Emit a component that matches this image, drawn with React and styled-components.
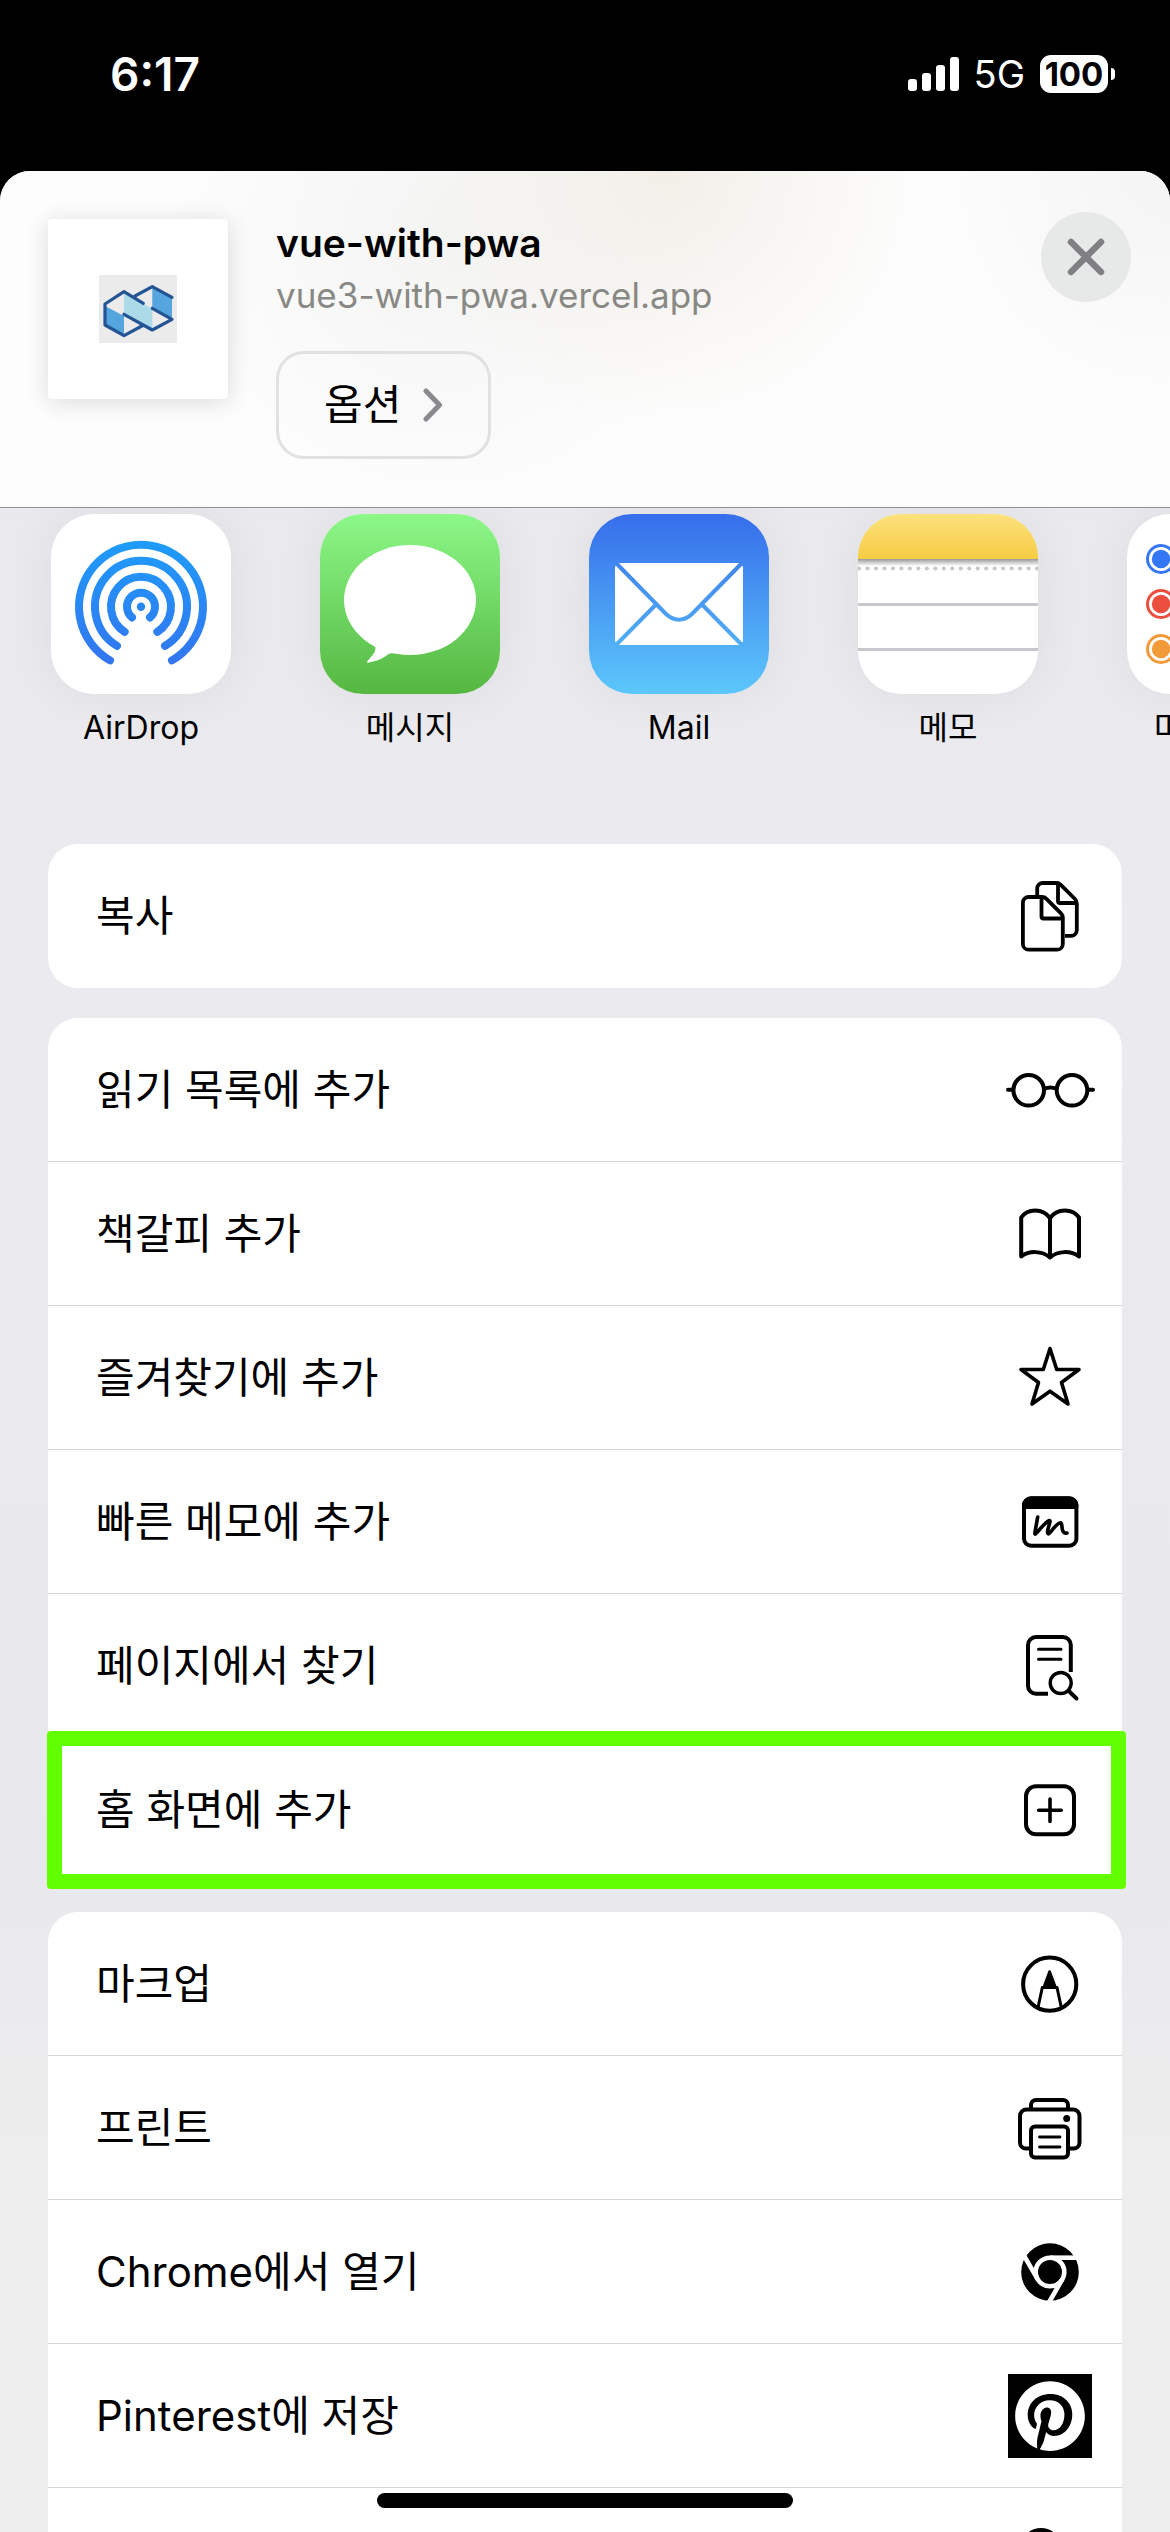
import React from "react";
import styled, { createGlobalStyle } from "styled-components";
import { FaPinterest } from "react-icons/fa";

const GlobalStyle = createGlobalStyle`
  *, *::before, *::after { box-sizing: border-box; }
  html { background: #000; }
  body {
    margin: 0;
    font-family: Inter, "Noto Sans CJK KR", sans-serif;
    color: #000;
  }
  button { font: inherit; color: inherit; cursor: pointer; }
`;

const Screen = styled.div`
  position: relative;
  display: flex;
  flex-direction: column;
  height: 100vh;
  overflow: hidden;
  background: #000;
`;

const StatusBar = styled.div`
  display: flex;
  flex: none;
  align-items: flex-start;
  justify-content: space-between;
  height: 171px;
  padding: 50px 55px 0 110px;
  color: #fff;
`;

const Clock = styled.time`
  font-size: 46px;
  font-weight: 600;
  line-height: 48px;
`;

const Indicators = styled.div`
  display: flex;
  align-items: center;
  height: 48px;
`;

const SignalIcon = styled.svg`
  width: 52px;
  height: 36px;
`;

const Network = styled.span`
  margin: 0 15px 0 14px;
  font-size: 38px;
  line-height: 48px;
`;

const Battery = styled.span`
  width: 68px;
  border-radius: 11px;
  background: #fff;
  color: #000;
  font-size: 33px;
  font-weight: 700;
  line-height: 38px;
  text-align: center;
`;

const BatteryCap = styled.span`
  width: 4px;
  height: 12px;
  margin-left: 3px;
  border-radius: 0 6px 6px 0;
  background: #fff;
`;

const Sheet = styled.main`
  flex: 1;
  min-height: 0;
  overflow: hidden;
  border-radius: 30px 30px 0 0;
  background: linear-gradient(#e9e8ec 0%, #ebeaee 35%, #e9e8ec 72%, #eeeeee 86%, #ededed 100%);
`;

const SheetHeader = styled.header`
  display: flex;
  gap: 48px;
  padding: 48px;
  border-bottom: 1px solid #8e8e93;
  background:
    radial-gradient(circle 260px at 57% 0, rgba(240, 236, 228, 0.8), rgba(240, 236, 228, 0)),
    radial-gradient(circle 280px at 38% 20%, rgba(243, 243, 242, 0.9), rgba(243, 243, 242, 0)),
    radial-gradient(circle 240px at 100% 0, rgba(242, 243, 242, 0.9), rgba(242, 243, 242, 0)),
    #fdfdfd;
`;

const Thumbnail = styled.div`
  display: grid;
  flex: none;
  place-items: center;
  width: 180px;
  height: 180px;
  border-radius: 4px;
  background: #fff;
  box-shadow: 0 3px 24px rgba(0, 0, 0, 0.14);
`;

const SiteInfo = styled.div`
  display: flex;
  flex: 1;
  flex-direction: column;
  align-items: flex-start;
  min-width: 0;
`;

const Title = styled.h1`
  margin: 0 0 6px;
  font-size: 39px;
  font-weight: 600;
  line-height: 48px;
`;

const Address = styled.p`
  margin: 0 0 34px;
  color: #888884;
  font-size: 35px;
  line-height: 44px;
`;

const OptionsButton = styled.button`
  display: flex;
  align-items: center;
  gap: 22px;
  height: 108px;
  padding: 0 45px;
  border: 3px solid #e1e1e2;
  border-radius: 28px;
  background: transparent;
  font-size: 42px;
  line-height: 48px;
`;

const CloseButton = styled.button`
  display: grid;
  flex: none;
  place-items: center;
  width: 90px;
  height: 90px;
  margin: -7px -9px 0 0;
  padding: 0;
  border: 0;
  border-radius: 50%;
  background: #e7e8e8;
`;

const AppStrip = styled.nav`
  display: flex;
  gap: 89px;
  padding: 6px 0 96px 51px;
  overflow: hidden;
`;

const AppButton = styled.button`
  display: flex;
  flex: none;
  flex-direction: column;
  align-items: center;
  gap: 14px;
  width: 180px;
  padding: 0;
  border: 0;
  background: none;
  font-size: 32px;
  line-height: 40px;
  white-space: nowrap;
`;

const AppTile = styled.svg`
  width: 180px;
  height: 180px;
  border-radius: 43px;
  background: #fff;
  box-shadow: 0 0 50px rgba(0, 0, 0, 0.06);
`;

const Groups = styled.div`
  display: flex;
  flex-direction: column;
  gap: 30px;
  padding: 0 48px;
`;

const Group = styled.ul`
  margin: 0;
  padding: 0;
  border-radius: 30px;
  background: #fff;
  list-style: none;
`;

const Row = styled.li`
  position: relative;
  border-bottom: 1px solid #d5d5d8;
  &:last-child { border-bottom-color: transparent; }
`;

const Action = styled.button`
  display: flex;
  align-items: center;
  justify-content: space-between;
  width: 100%;
  height: 143px;
  padding: 0 27px 0 48px;
  border: 0;
  background: none;
  font-size: 42px;
  line-height: 60px;
  text-align: left;
`;

const ActionIcon = styled.svg`
  flex: none;
  width: 90px;
  height: 90px;
  fill: none;
  stroke: #000;
  stroke-width: 4;
  stroke-linecap: round;
  stroke-linejoin: round;
`;

const Highlight = styled.span`
  position: absolute;
  inset: -7px -4px -8px -1px;
  border: 15px solid #61ff00;
  border-radius: 4px;
  pointer-events: none;
`;

const HomeIndicator = styled.div`
  position: absolute;
  bottom: 24px;
  left: 50%;
  width: 416px;
  height: 15px;
  margin-left: -208px;
  border-radius: 8px;
  background: #000;
`;

const SiteLogo = () => (
  <svg width="78" height="68" viewBox="0 0 78 68" aria-hidden="true">
    <rect width="78" height="68" fill="#ebebeb" />
    <path d="M6 31L25 41V60L6 50ZM53.3 12L73 23V44L53.3 34Z" fill="#55a6de" />
    <path d="M25 17L53.3 34V55L25 40Z" fill="#addae8" />
    <path
      d="M44.3 28.3L25 16.7L6 29V50L25 60.7L43.7 50.5M36 21L53.3 11.7L73 22.3M25 39.3L53.3 55L73 44.3L53.3 33.3"
      fill="none" stroke="#245494" strokeWidth="3.2" strokeLinecap="round" strokeLinejoin="round"
    />
  </svg>
);

const ring = (r, degrees) => {
  const a = (degrees * Math.PI) / 180;
  const dx = r * Math.sin(a);
  const y = 92.7 + r * Math.cos(a);
  return `M${90 - dx} ${y}A${r} ${r} 0 1 1 ${90 + dx} ${y}`;
};

const AirDropArt = () => (
  <>
    <defs>
      <linearGradient id="airdrop" gradientUnits="userSpaceOnUse" x1="0" y1="27" x2="0" y2="151">
        <stop stopColor="#1e9cfa" />
        <stop offset="1" stopColor="#3375ef" />
      </linearGradient>
    </defs>
    <path
      d={[ring(62, 30), ring(46, 31.5), ring(30, 33), ring(14, 40)].join("")}
      fill="none" stroke="url(#airdrop)" strokeWidth="8" strokeLinecap="round"
    />
    <circle cx="90" cy="92.7" r="4.2" fill="url(#airdrop)" />
  </>
);

const MessagesArt = () => (
  <>
    <defs>
      <linearGradient id="messages" x1="0" y1="0" x2="0" y2="1">
        <stop stopColor="#8cf888" />
        <stop offset="1" stopColor="#55b741" />
      </linearGradient>
    </defs>
    <rect width="180" height="180" fill="url(#messages)" />
    <ellipse cx="90" cy="86" rx="66" ry="55" fill="#fff" />
    <path d="M52 129C58 134 56 138 47.5 147C46.500 148.500 47 149 49 148.500C58 147 63 144 68 140.500C70 139.500 71 139 74 139.500L80 125Z" fill="#fff" />
  </>
);

const MailArt = () => (
  <>
    <defs>
      <linearGradient id="mail" gradientUnits="userSpaceOnUse" x1="0" y1="0" x2="0" y2="180">
        <stop stopColor="#366deb" />
        <stop offset="1" stopColor="#5cc7fa" />
      </linearGradient>
    </defs>
    <rect width="180" height="180" fill="url(#mail)" />
    <rect x="26" y="49" width="128" height="82" rx="5" fill="#fff" />
    <path
      d="M27 49L77 100C85 107.500 95 107.500 103 100L153 49M27 131L67 90.500M153 131L113 90.500"
      fill="none" stroke="url(#mail)" strokeWidth="4"
    />
  </>
);

const NotesArt = () => (
  <>
    <defs>
      <linearGradient id="notes" x1="0" y1="0" x2="0" y2="1">
        <stop stopColor="#fbe17d" />
        <stop offset="1" stopColor="#f7cc44" />
      </linearGradient>
      <linearGradient id="notesShade" x1="0" y1="0" x2="0" y2="1">
        <stop stopColor="#999" />
        <stop offset="1" stopColor="#fff" />
      </linearGradient>
    </defs>
    <rect width="180" height="45" fill="url(#notes)" />
    <rect y="45" width="180" height="7" fill="url(#notesShade)" />
    <path d="M1 54.500H182" stroke="#c7c7cc" strokeWidth="4.200" strokeLinecap="round" strokeDasharray="0 8.480" />
    <path d="M0 90.500H180M0 135.500H180" stroke="#c7c7cc" strokeWidth="3" />
  </>
);

const RemindersArt = () => (
  <>
    {["#3478f6", "#eb4e3d", "#f19a37"].map((color, i) => (
      <g key={color}>
        <circle cx="34" cy={45 + i * 45} r="13.500" fill="none" stroke={color} strokeWidth="3" />
        <circle cx="34" cy={45 + i * 45} r="9.200" fill={color} />
      </g>
    ))}
  </>
);

const apps = [
  { name: "AirDrop", Art: AirDropArt },
  { name: "메시지", Art: MessagesArt },
  { name: "Mail", Art: MailArt },
  { name: "메모", Art: NotesArt },
  { name: "미리 알림", Art: RemindersArt },
];

const icons = {
  copy: (
    <g strokeWidth="3.800">
      <path d="M32.200 24V17.500a5.500 5.500 0 0 1 5.500-5.500H51c2 0 3.500.6 4.800 1.900L70 28c1.300 1.300 1.800 2.600 1.800 4.500V59a5.800 5.800 0 0 1-5.800 5.800H60" strokeLinecap="butt" />
      <path d="M53 12.500V30a2 2 0 0 0 2 2h16" />
      <path d="M23.700 26h13c2 0 3.500.6 4.800 1.900l14.500 14.500c1.300 1.300 1.800 2.600 1.800 4.500v26a5.800 5.800 0 0 1-5.800 5.800H23.700a5.800 5.800 0 0 1-5.800-5.800V31.800a5.800 5.800 0 0 1 5.800-5.800Z" />
      <path d="M36.500 26.500V45.500a2 2 0 0 0 2 2h19" />
    </g>
  ),
  glasses: (
    <>
      <circle cx="23.700" cy="45.300" r="15.300" />
      <circle cx="67" cy="45.300" r="15.300" />
      <path d="M39 43.800Q45.300 41 51.500 43.800M3 44.700H7.500M83.500 44.700H88" />
    </>
  ),
  book: <path d="M45 29C38 19 22.500 19 16.200 28.500V67.500C24 61.500 37 61.500 45 68.500C53 61.500 66 61.500 74 67.500V28.500C67.500 19 52 19 45 29V68" />,
  star: <path d="M45 15.500L51.700 36.500H74L56.500 49.500L63 71L45 58.200L27 71L33.500 49.500L16 36.500H38.300Z" strokeWidth="3.600" />,
  memo: (
    <>
      <rect x="19" y="21.300" width="52.400" height="47.400" rx="7" />
      <path d="M19 30V28a7 7 0 0 1 7-6.500h38.400a7 7 0 0 1 7 6.500v2Z" fill="#000" />
      <path d="M32.700 40L30 55C29.600 58 30.500 57.500 32 55.500C37 49.500 41.500 44.500 44.500 43.500C46.500 43.500 42 52 42.500 55.500C43 58 44.500 56.500 46 54.500C49 50.500 53 46 55.500 45.700C57.500 46 56.500 50 57.500 53C58.500 56 60 56.500 62 56" strokeWidth="3.600" />
    </>
  ),
  find: (
    <>
      <path d="M65.800 51V24a8 8 0 0 0-8-8H31a8 8 0 0 0-8 8V64.800a8 8 0 0 0 8 8H43" strokeLinecap="butt" />
      <path d="M33.500 28.200H56M33.500 38.200H56" strokeWidth="3" />
      <circle cx="55.700" cy="62" r="10.500" strokeWidth="3.400" />
      <path d="M63.500 69.800L71.500 77.500" />
    </>
  ),
  plus: (
    <>
      <rect x="21" y="21.300" width="48" height="48" rx="10" />
      <path d="M45 34V56.500M33.700 45.200H56.200" strokeWidth="3.600" />
    </>
  ),
  markup: (
    <>
      <circle cx="44.700" cy="45.200" r="26.600" />
      <path d="M33 68.500L37.300 48.500H52L56.300 68.500" strokeWidth="3" strokeLinecap="butt" />
      <path d="M44.600 32.500L38.700 48.500H50.600Z" fill="#000" strokeWidth="2.600" />
    </>
  ),
  printer: (
    <>
      <path d="M26 26V22a5 5 0 0 1 5-5H58a5 5 0 0 1 5 5v4M26 65.500H21a6 6 0 0 1-6-6V33a6.500 6.500 0 0 1 6.500-6.500H68a6.500 6.500 0 0 1 6.500 6.500v26.500a6 6 0 0 1-6 6H63" />
      <rect x="26" y="43.500" width="37" height="31" rx="4" />
      <path d="M34.500 54H55M34.500 64H55" strokeWidth="2.800" />
      <circle cx="61.700" cy="35.500" r="3.500" fill="#000" stroke="none" />
    </>
  ),
  chrome: (
    <g stroke="#fff" strokeWidth="4.600" strokeLinecap="butt">
      <circle cx="45" cy="45" r="28.800" fill="#000" stroke="none" />
      <circle cx="45" cy="45" r="14.300" />
      {[0, 120, 240].map((turn) => (
        <path key={turn} d="M45 30.700H76" transform={`rotate(${turn} 45 45)`} />
      ))}
    </g>
  ),
  pinterest: (
    <>
      <rect x="3" y="3" width="84" height="84" fill="#000" stroke="none" />
      <FaPinterest x="9" y="9" size={72} color="#fff" stroke="none" strokeWidth="0" />
    </>
  ),
  search: (
    <>
      <circle cx="36" cy="34" r="19" />
      <path d="M50 48L70 68" />
    </>
  ),
};

const groups = [
  [{ label: "복사", icon: "copy" }],
  [
    { label: "읽기 목록에 추가", icon: "glasses" },
    { label: "책갈피 추가", icon: "book" },
    { label: "즐겨찾기에 추가", icon: "star" },
    { label: "빠른 메모에 추가", icon: "memo" },
    { label: "페이지에서 찾기", icon: "find" },
    { label: "홈 화면에 추가", icon: "plus", highlighted: true },
  ],
  [
    { label: "마크업", icon: "markup" },
    { label: "프린트", icon: "printer" },
    { label: "Chrome에서 열기", icon: "chrome" },
    { label: "Pinterest에 저장", icon: "pinterest" },
    { icon: "search" },
  ],
];

export default function App() {
  return (
    <Screen>
      <GlobalStyle />
      <StatusBar>
        <Clock>6:17</Clock>
        <Indicators>
          <SignalIcon viewBox="0 0 52 36" fill="#fff" aria-hidden="true">
            <rect x="0" y="23" width="9" height="12" rx="3" />
            <rect x="14" y="17" width="9" height="18" rx="3" />
            <rect x="28" y="9" width="9" height="26" rx="3" />
            <rect x="42" y="1" width="9" height="34" rx="3" />
          </SignalIcon>
          <Network>5G</Network>
          <Battery>100</Battery>
          <BatteryCap />
        </Indicators>
      </StatusBar>
      <Sheet>
        <SheetHeader>
          <Thumbnail><SiteLogo /></Thumbnail>
          <SiteInfo>
            <Title>vue-with-pwa</Title>
            <Address>vue3-with-pwa.vercel.app</Address>
            <OptionsButton type="button">
              옵션
              <svg width="20" height="34" viewBox="0 0 20 34" fill="none" stroke="#8a8a8e" strokeWidth="5" strokeLinecap="round" strokeLinejoin="round" aria-hidden="true">
                <path d="M3 3L16.500 17L3 31" />
              </svg>
            </OptionsButton>
          </SiteInfo>
          <CloseButton type="button" aria-label="닫기">
            <svg width="38" height="38" viewBox="0 0 38 38" stroke="#808084" strokeWidth="6.500" strokeLinecap="round" aria-hidden="true">
              <path d="M4 4L34 34M34 4L4 34" />
            </svg>
          </CloseButton>
        </SheetHeader>
        <AppStrip>
          {apps.map(({ name, Art }) => (
            <AppButton type="button" key={name}>
              <AppTile viewBox="0 0 180 180" aria-hidden="true"><Art /></AppTile>
              {name}
            </AppButton>
          ))}
        </AppStrip>
        <Groups>
          {groups.map((rows) => (
            <Group key={rows[0].icon}>
              {rows.map(({ label, icon, highlighted }) => (
                <Row key={icon}>
                  <Action type="button" aria-label={label ? undefined : "검색"}>
                    <span>{label}</span>
                    <ActionIcon viewBox="0 0 90 90" aria-hidden="true">{icons[icon]}</ActionIcon>
                  </Action>
                  {highlighted && <Highlight />}
                </Row>
              ))}
            </Group>
          ))}
        </Groups>
      </Sheet>
      <HomeIndicator />
    </Screen>
  );
}
